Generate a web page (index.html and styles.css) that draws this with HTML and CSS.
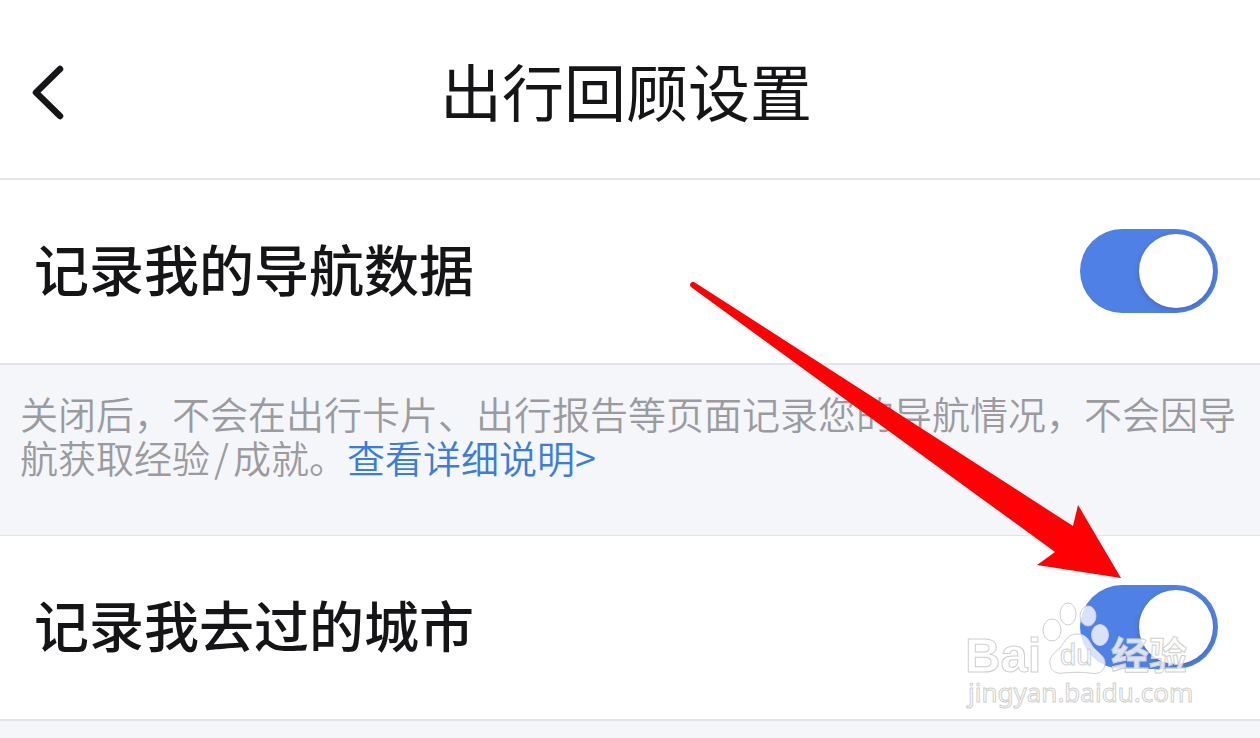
FILE: index.html
```html
<!DOCTYPE html>
<html lang="zh-CN">
<head>
    <meta charset="UTF-8">
    <meta name="viewport" content="width=device-width, initial-scale=1.0">
    <title>出行回顾设置</title>
    <link rel="stylesheet" href="styles.css">
</head>
<body>
    <div class="page">
        <header class="header">
            <button type="button" class="back-btn" aria-label="返回">
                <svg class="back-icon" viewBox="0 0 34 56">
                    <path d="M30 4 L6 27.500 L30 51" fill="none" stroke="#151518" stroke-width="6.500" stroke-linecap="round" stroke-linejoin="round"/>
                </svg>
            </button>
            <h1 class="title">出行回顾设置</h1>
        </header>

        <main>
            <div class="setting-row">
                <label class="setting-label" for="navData">记录我的导航数据</label>
                <input type="checkbox" class="switch" id="navData" checked>
            </div>
            <p class="note">关闭后，不会在出行卡片、出行报告等页面记录您的导航情况，不会因导航获取经验<span class="slash">/</span>成就。<a class="note-link" href="#">查看详细说明&gt;</a></p>
            <div class="setting-row">
                <label class="setting-label" for="cities">记录我去过的城市</label>
                <input type="checkbox" class="switch" id="cities" checked>
            </div>
        </main>

        <!-- Watermark -->
        <svg class="watermark" viewBox="0 0 240 116">
            <g fill="#fff" fill-opacity="0.78" stroke="#cfcfcf" stroke-width="1">
                <text class="mark-latin" x="5" y="72" font-size="49">Bai</text>
                <ellipse cx="92" cy="30" rx="9" ry="11"/>
                <ellipse cx="108" cy="14" rx="8" ry="11"/>
                <ellipse cx="128" cy="16" rx="8" ry="10"/>
                <ellipse cx="140" cy="35" rx="8.500" ry="10.500"/>
                <path d="M117 34 C107 34 105 42 100 48 C94 53 89 57 90 64 C91 72 97 74 104 73 C113 72 121 72 130 73 C139 75 145 71 145 63 C145 56 138 53 133 47 C129 41 127 34 117 34 Z"/>
                <text class="mark-du" x="100" y="65" font-size="29">du</text>
                <text class="mark-cjk" x="151" y="69" font-size="38">经验</text>
                <text class="mark-url" x="8" y="102" font-size="26">jingyan.baidu.com</text>
            </g>
        </svg>

        <!-- Arrow to the second switch -->
        <svg class="arrow" viewBox="0 0 434 298">
            <path d="M5 2 L384 246 L389 225 L432 298 L348 285 L366 272 L2 7 A3 3 0 0 1 5 2 Z" fill="#ff0004"/>
        </svg>
    </div>
</body>
</html>
```
FILE: styles.css
```css
* {
    box-sizing: border-box;
}
body {
    margin: 0;
    background-color: #f4f6fa;
    color: #151518;
    font-family: "Noto Sans CJK SC", sans-serif;
}
.page {
    position: relative;
    min-height: 100vh;
    overflow: hidden;
}
.header {
    display: grid;
    grid-template-columns: 80px 1fr 80px;
    align-items: center;
    padding: 50px 8px 48px 0;
    background-color: #fff;
    border-bottom: 2px solid #e6e6e8;
}
.back-btn {
    display: flex;
    padding: 14px 30px 8px;
    border: none;
    background: none;
    cursor: pointer;
}
.back-icon {
    width: 34px;
    height: 56px;
    flex: none;
}
.title {
    margin: 0;
    font-size: 62px;
    line-height: 80px;
    font-weight: 400;
    text-align: center;
}
.setting-row {
    display: flex;
    align-items: center;
    justify-content: space-between;
    padding: 49px 42px 50px 34px;
    background-color: #fff;
    border-bottom: 2px solid #e2e3e6;
}
.setting-label {
    padding-bottom: 8px;
    font-size: 55px;
    line-height: 76px;
    font-weight: 500;
}
.switch {
    appearance: none;
    display: flex;
    align-items: center;
    justify-content: flex-end;
    width: 138px;
    height: 84px;
    margin: 0;
    padding: 5px;
    border-radius: 42px;
    background-color: #4f80e6;
    cursor: pointer;
}
.switch::before {
    content: "";
    width: 74px;
    height: 74px;
    border-radius: 50%;
    background-color: #fff;
    box-shadow: 0 2px 5px rgba(40, 60, 110, 0.3);
}
.switch:not(:checked) {
    justify-content: flex-start;
    background-color: #d5d7dc;
}
.note {
    margin: 0;
    padding: 26px 20px 56px;
    border-bottom: 1px solid #e2e3e6;
    color: #9b9b9f;
    font-size: 38px;
    line-height: 44px;
    font-weight: 350;
}
.slash {
    margin: 0 4px;
}
.note-link {
    color: #3b7ce0;
    text-decoration: none;
}
.arrow {
    position: absolute;
    top: 280px;
    right: 137px;
    width: 434px;
    height: 298px;
    pointer-events: none;
}
.watermark {
    position: absolute;
    top: 600px;
    right: 60px;
    width: 240px;
    height: 116px;
    pointer-events: none;
}
.mark-latin {
    font-family: "Liberation Sans", sans-serif;
    font-weight: 700;
}
.mark-du {
    font-family: "Liberation Sans", sans-serif;
}
.mark-cjk {
    font-family: "Noto Sans CJK SC", sans-serif;
    font-weight: 700;
}
.mark-url {
    font-family: "Noto Sans", sans-serif;
}
```
